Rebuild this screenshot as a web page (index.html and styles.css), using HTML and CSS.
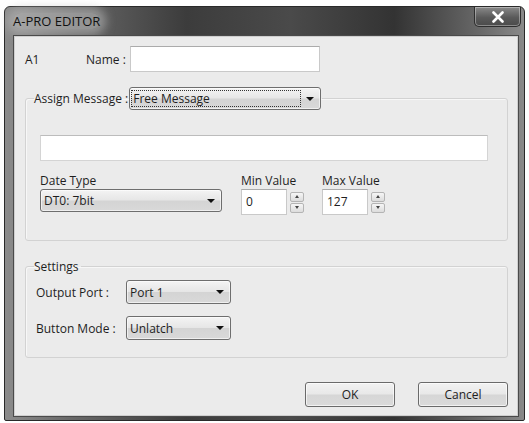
FILE: index.html
```html
<!DOCTYPE html>
<html>
<head>
<meta charset="utf-8">
<link rel="stylesheet" href="styles.css">
</head>
<body>
<div class="window">
  <div class="titlebar">
    <span class="title">A-PRO EDITOR</span>
    <button class="close" aria-label="Close">
      <svg width="14" height="12" viewBox="0 0 14 12"><path d="M2.5 1.5 L11.5 10.5 M11.5 1.5 L2.5 10.5" stroke="#fff" stroke-width="2.6" stroke-linecap="round"/></svg>
    </button>
  </div>
  <div class="client">
    <div class="name-row">
      <span class="a1">A1</span>
      <span class="name-label">Name :</span>
      <div class="textbox name-box"></div>
    </div>

    <fieldset class="group group-msg">
      <legend class="legend">
        <span>Assign Message :</span>
        <div class="combo combo-msg"><span class="focus">Free Message</span><span class="arrow"></span></div>
      </legend>
      <div class="group-body msg-body">
        <div class="textbox msg-box"></div>
        <div class="params">
          <div class="param">
            <span class="plabel">Date Type</span>
            <div class="combo combo-type"><span class="val">DT0: 7bit</span><span class="arrow"></span></div>
          </div>
          <div class="param param-min">
            <span class="plabel">Min Value</span>
            <div class="spin">
              <div class="textbox num">0</div>
              <div class="spinbtns"><span class="sb up"></span><span class="sb down"></span></div>
            </div>
          </div>
          <div class="param param-max">
            <span class="plabel">Max Value</span>
            <div class="spin">
              <div class="textbox num">127</div>
              <div class="spinbtns"><span class="sb up"></span><span class="sb down"></span></div>
            </div>
          </div>
        </div>
      </div>
    </fieldset>

    <fieldset class="group group-set">
      <legend class="legend legend-set">Settings</legend>
      <div class="group-body set-body">
        <div class="srow">
          <span class="slabel">Output Port :</span>
          <div class="combo combo-small"><span class="val">Port 1</span><span class="arrow"></span></div>
        </div>
        <div class="srow">
          <span class="slabel">Button Mode :</span>
          <div class="combo combo-small"><span class="val">Unlatch</span><span class="arrow"></span></div>
        </div>
      </div>
    </fieldset>

    <div class="buttons">
      <button class="btn">OK</button>
      <button class="btn">Cancel</button>
    </div>
  </div>
</div>
</body>
</html>
```

FILE: styles.css
```css
* { box-sizing: border-box; }
html, body { margin: 0; padding: 0; background: #ffffff; }
body {
  font-family: "Open Sans", "Noto Sans", sans-serif;
  font-size: 12px;
  color: #1e1e1e;
  width: 529px;
  height: 423px;
  overflow: hidden;
}
.window {
  margin: 6px 0 0 4px;
  width: 521px;
  height: 415px;
  border: 1px solid #2a2a2a;
  border-radius: 6px 6px 2px 2px;
  background: linear-gradient(90deg, #8c8c8c 0%, #6a6a6a 12%, #3c3c3c 35%, #4a4a4a 55%, #333 75%, #6a6a6a 92%, #8a8a8a 100%);
  display: flex;
  flex-direction: column;
  padding: 0 5px 3px 8px;
}
.titlebar {
  height: 28px;
  display: flex;
  align-items: flex-start;
  justify-content: space-between;
}
.title {
  margin-top: 6px;
  font-size: 13px;
  color: #111;
  background: rgba(190,190,190,0.55);
  box-shadow: 0 0 10px 6px rgba(190,190,190,0.55);
  border-radius: 8px;
  line-height: 16px;
}
.close {
  width: 47px;
  height: 20px;
  margin-right: -2px;
  border: 1px solid #2e2e2e;
  border-top: none;
  border-radius: 0 0 5px 5px;
  background: linear-gradient(#8a8a8a, #5a5a5a 55%, #4a4a4a);
  box-shadow: inset 0 0 0 1px rgba(255,255,255,0.35);
  display: flex;
  align-items: center;
  justify-content: center;
  padding: 0;
}
.client {
  flex: 1;
  background: #ebebeb;
  border: 1px solid #4a4a4a;
  box-shadow: inset 0 0 0 1px #cfcfcf;
  padding: 10px 10px 0 11px;
  display: flex;
  flex-direction: column;
}
.name-row {
  display: flex;
  align-items: center;
  height: 26px;
}
.a1 { width: 61px; }
.name-label { width: 44px; }
.textbox {
  background: #ffffff;
  border: 1px solid #c9c9c9;
  border-top-color: #ababab;
}
.name-box { width: 190px; height: 26px; }

.group {
  margin: 0;
  border: 1px solid #d2d2d2;
  border-radius: 3px;
  box-shadow: inset 1px 1px 0 #f7f7f7;
  padding: 0;
  min-width: 0;
}
.legend {
  padding: 0 1px 0 0;
  margin-left: 8px;
  display: flex;
  align-items: center;
  height: 23px;
}
.group-msg {
  margin-top: 15px;
  height: 154px;
}
.msg-body { padding: 25px 0 0 14px; }
.combo {
  height: 23px;
  border: 1px solid #6e6e6e;
  border-radius: 3px;
  background: linear-gradient(#f4f4f4 0%, #e6e6e6 48%, #d4d4d4 52%, #d9d9d9 100%);
  box-shadow: inset 0 0 0 1px rgba(255,255,255,0.6);
  display: flex;
  align-items: center;
  padding-left: 3px;
}
.combo .arrow {
  margin-left: auto;
  margin-right: 6px;
  width: 0; height: 0;
  border-left: 4px solid transparent;
  border-right: 4px solid transparent;
  border-top: 4px solid #111;
}
.combo-msg { width: 192px; padding-left: 1px; margin-left: 1px; }
.combo-msg .focus {
  width: 170px;
  height: 17px;
  border: 1px dotted #333;
  padding-left: 1px;
  line-height: 15px;
}
.msg-box {
  width: 448px;
  height: 26px;
  border-color: #d4d4d4;
  border-top-color: #bcbcbc;
}
.params {
  display: flex;
  margin-top: 11px;
}
.param { display: flex; flex-direction: column; }
.plabel { line-height: 17px; height: 17px; }
.combo-type { width: 182px; }
.param-min { margin-left: 19px; }
.param-max { margin-left: 18px; }
.spin { display: flex; align-items: center; }
.num {
  width: 46px;
  height: 26px;
  padding: 4px 0 0 4px;
  line-height: 16px;
}
.spinbtns {
  display: flex;
  flex-direction: column;
  margin-left: 3px;
  gap: 1px;
}
.sb {
  width: 14px;
  height: 10px;
  border: 1px solid #b4b4b4;
  border-radius: 2px;
  background: linear-gradient(#f6f6f6, #dcdcdc);
  display: flex;
  align-items: center;
  justify-content: center;
}
.sb::after {
  content: "";
  width: 0; height: 0;
  border-left: 2.5px solid transparent;
  border-right: 2.5px solid transparent;
}
.sb.up::after { border-bottom: 3px solid #444; }
.sb.down::after { border-top: 3px solid #444; }

.group-set {
  margin-top: 17px;
  height: 100px;
}
.legend-set {
  height: 17px;
  line-height: 17px;
  padding: 0 2px 0 0;
}
.set-body { padding: 5px 0 0 10px; }
.srow {
  display: flex;
  align-items: center;
  height: 24px;
  margin-bottom: 12px;
}
.slabel { width: 90px; }
.combo-small { width: 105px; height: 24px; }

.buttons {
  display: flex;
  justify-content: flex-end;
  gap: 23px;
  margin-top: 24px;
}
.btn {
  width: 90px;
  height: 25px;
  font-family: inherit;
  font-size: 12px;
  color: #1e1e1e;
  border: 1px solid #6a6a6a;
  border-radius: 3px;
  background: linear-gradient(#f2f2f2 0%, #e8e8e8 48%, #d6d6d6 52%, #dadada 100%);
  box-shadow: inset 0 0 0 1px rgba(255,255,255,0.65);
  padding: 0;
}
```
